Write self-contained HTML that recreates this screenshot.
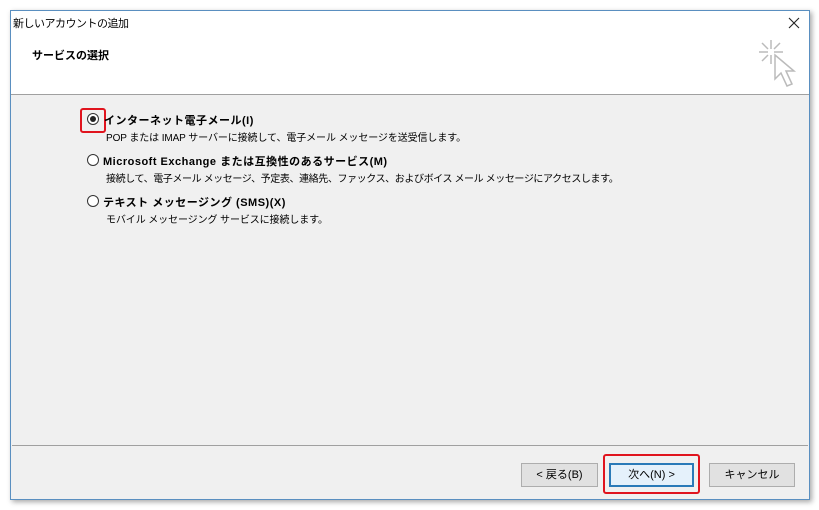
<!DOCTYPE html>
<html><head><meta charset="utf-8"><style>
*{margin:0;padding:0;box-sizing:border-box}
body{width:819px;height:510px;background:#fff;position:relative;overflow:hidden;font-family:"Liberation Sans","Noto Sans CJK JP",sans-serif;font-size:11px;color:#000}
.a{position:absolute}
.win{left:10px;top:10px;width:800px;height:490px;border:1px solid #5a8fc0;background:#f0f0f0;box-shadow:2px 2px 5px rgba(0,0,0,.35)}
.t{white-space:nowrap}
.d{font-size:10px;letter-spacing:-0.1px}
.b{font-weight:bold;letter-spacing:0.5px}
.rad{width:12px;height:12px;border:1px solid #333;border-radius:50%;background:#fff}
.btn{height:24px;border:1px solid #adadad;background:#e1e1e1;text-align:center;line-height:22px;font-size:11px}
</style></head><body>
<div class="a win"></div>
<div class="a" style="left:11px;top:11px;width:798px;height:84px;background:#fff;border-bottom:1px solid #a0a0a0"></div>
<div class="a t" style="left:13px;top:15px;font-size:11px;letter-spacing:-0.5px">新しいアカウントの追加</div>
<svg class="a" style="left:788px;top:17px" width="12" height="12" viewBox="0 0 12 12" stroke="#222" stroke-width="1.1"><path d="M1 1l10 10M11 1L1 11"/></svg>
<div class="a t" style="left:32px;top:47px;font-size:11px;font-weight:bold">サービスの選択</div>
<svg class="a" style="left:757px;top:38px" width="40" height="54" viewBox="0 0 40 54" fill="none" stroke="#bbb" stroke-width="1.5">
<path d="M14 2v9M14 17v9M2 14h9M17 14h9M5 5l6 6M23 5l-6 6M5 23l6-6"/>
<path d="M18 17l0 24 6-6 6 13 5-2-6-13 8 0z" fill="#fff"/>
</svg>
<div class="a rad" style="left:87px;top:113px"></div>
<div class="a" style="left:90px;top:116px;width:6px;height:6px;border-radius:50%;background:#222"></div>
<div class="a" style="left:80px;top:108px;width:26px;height:25px;border:2px solid #e0141e;border-radius:3px"></div>
<div class="a t b" style="left:104px;top:112px">インターネット電子メール(I)</div>
<div class="a t d" style="left:106px;top:129px">POP または IMAP サーバーに接続して、電子メール メッセージを送受信します。</div>
<div class="a rad" style="left:87px;top:154px"></div>
<div class="a t b" style="left:103px;top:153px">Microsoft Exchange または互換性のあるサービス(M)</div>
<div class="a t d" style="left:106px;top:170px;letter-spacing:-0.4px">接続して、電子メール メッセージ、予定表、連絡先、ファックス、およびボイス メール メッセージにアクセスします。</div>
<div class="a rad" style="left:87px;top:195px"></div>
<div class="a t b" style="left:103px;top:194px">テキスト メッセージング (SMS)(X)</div>
<div class="a t d" style="left:106px;top:211px">モバイル メッセージング サービスに接続します。</div>
<div class="a" style="left:12px;top:445px;width:796px;height:1px;background:#a0a0a0"></div>
<div class="a btn" style="left:521px;top:463px;width:77px">&lt; 戻る(B)</div>
<div class="a btn" style="left:609px;top:463px;width:85px;border:2px solid #2a7ab8;background:#e5f1fb;line-height:20px">次へ(N) &gt;</div>
<div class="a" style="left:603px;top:454px;width:97px;height:40px;border:2px solid #e0141e;border-radius:3px"></div>
<div class="a btn" style="left:709px;top:463px;width:86px">キャンセル</div>
</body></html>
